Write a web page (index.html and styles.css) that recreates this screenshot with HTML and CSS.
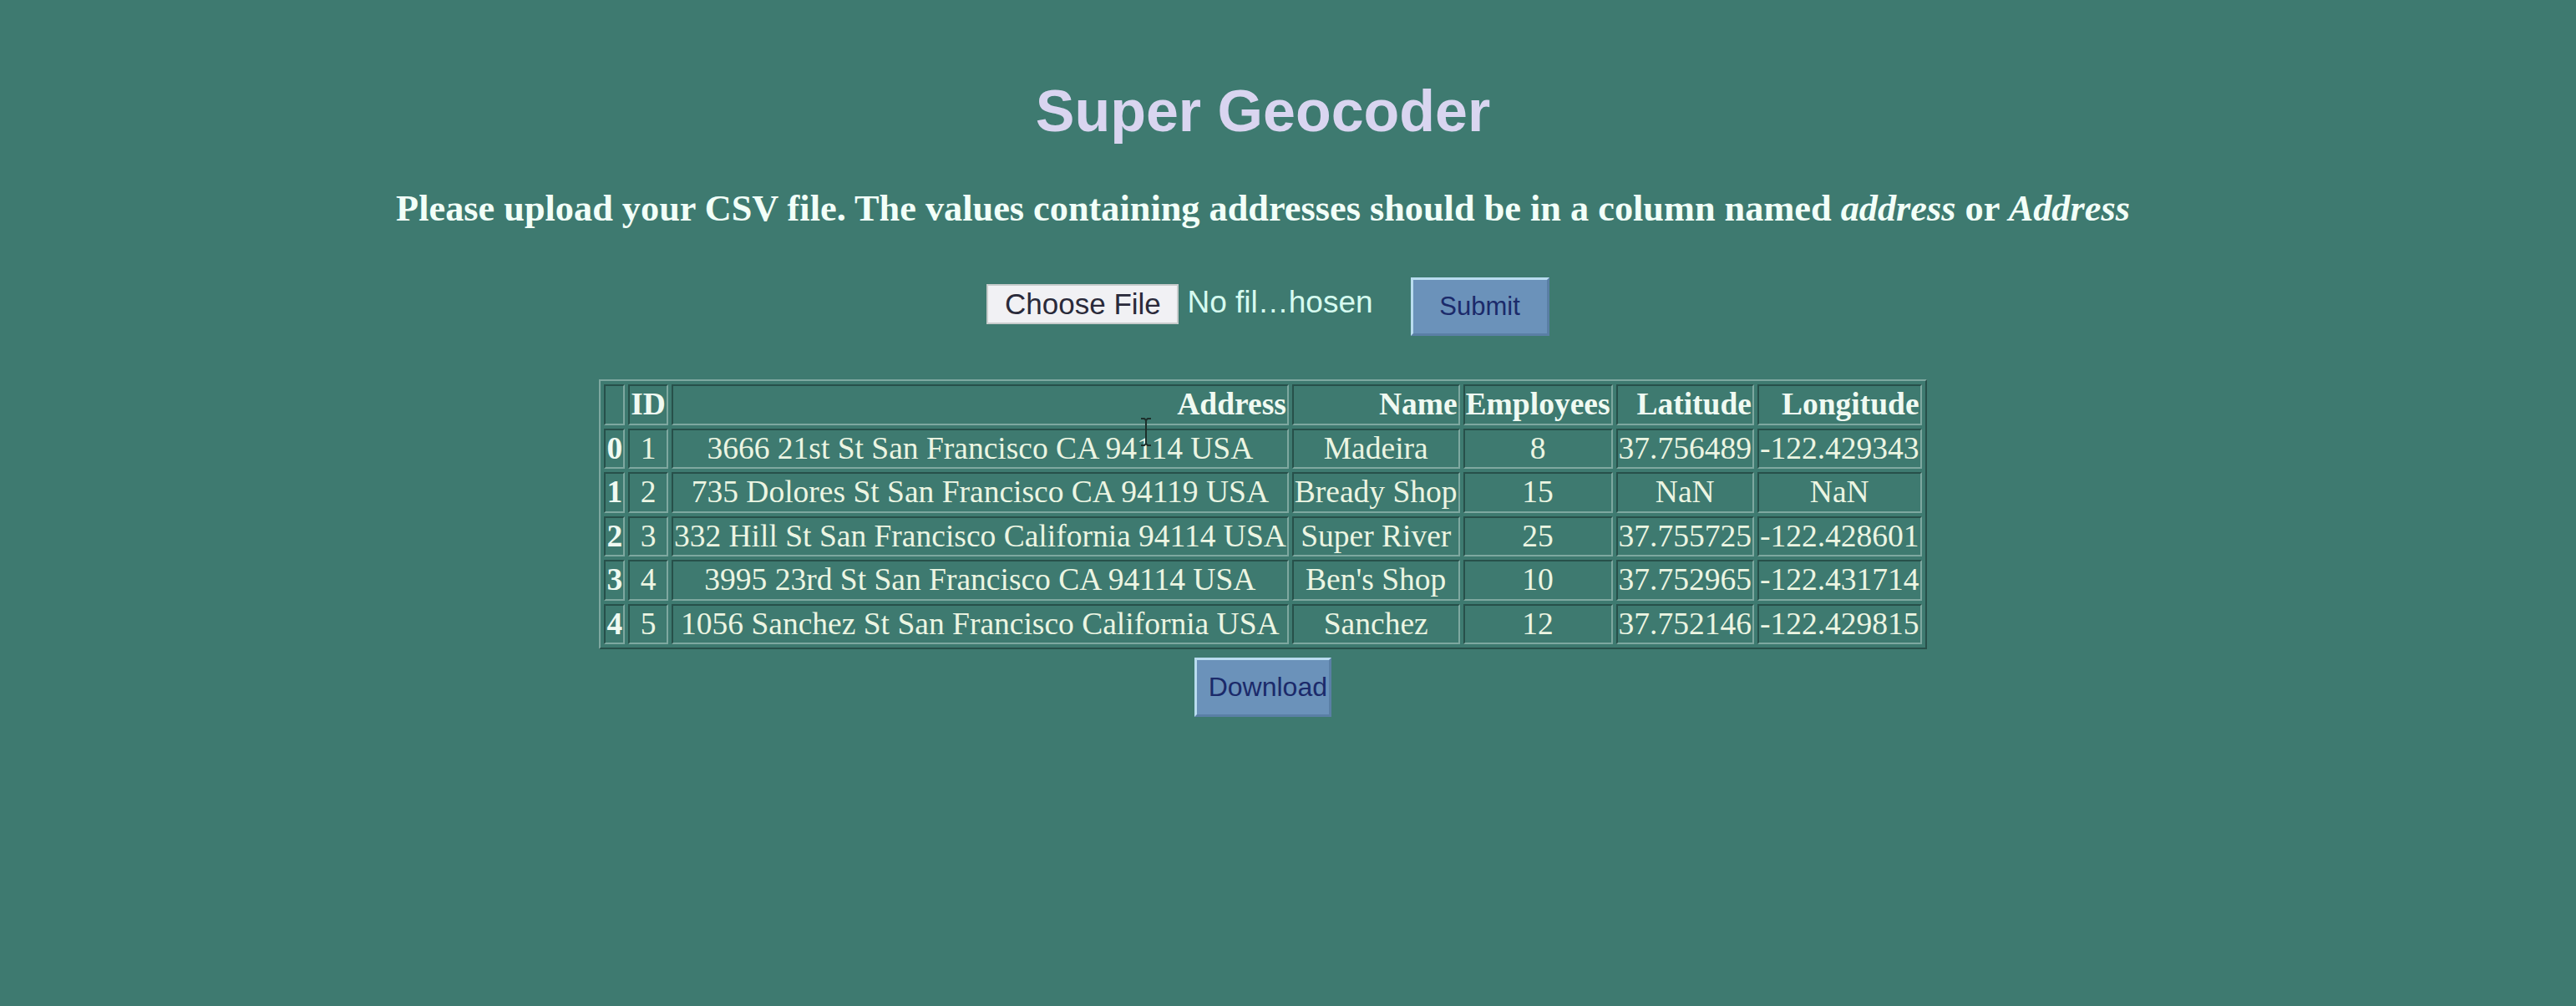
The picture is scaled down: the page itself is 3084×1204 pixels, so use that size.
FILE: index.html
```html
<!DOCTYPE html>
<html lang="en">
<head>
<meta charset="utf-8">
<title>Super Geocoder</title>
<link rel="stylesheet" href="styles.css">
</head>
<body>
<div class="page">
  <h1 class="title">Super Geocoder</h1>
  <p class="lead">Please upload your CSV file. The values containing addresses should be in a column named <em>address</em> or <em>Address</em></p>
  <form class="upload">
    <span class="choose">Choose File</span>
    <span class="nofile">No fil…hosen</span>
    <button type="button" class="btn submit">Submit</button>
  </form>
  <div class="table-wrap">
    <table class="dataframe">
      <thead>
        <tr>
          <th></th><th>ID</th><th>Address</th><th>Name</th><th>Employees</th><th>Latitude</th><th>Longitude</th>
        </tr>
      </thead>
      <tbody>
        <tr><th>0</th><td>1</td><td>3666 21st St San Francisco CA 94114 USA</td><td>Madeira</td><td>8</td><td>37.756489</td><td>-122.429343</td></tr>
        <tr><th>1</th><td>2</td><td>735 Dolores St San Francisco CA 94119 USA</td><td>Bready Shop</td><td>15</td><td>NaN</td><td>NaN</td></tr>
        <tr><th>2</th><td>3</td><td>332 Hill St San Francisco California 94114 USA</td><td>Super River</td><td>25</td><td>37.755725</td><td>-122.428601</td></tr>
        <tr><th>3</th><td>4</td><td>3995 23rd St San Francisco CA 94114 USA</td><td>Ben's Shop</td><td>10</td><td>37.752965</td><td>-122.431714</td></tr>
        <tr><th>4</th><td>5</td><td>1056 Sanchez St San Francisco California USA</td><td>Sanchez</td><td>12</td><td>37.752146</td><td>-122.429815</td></tr>
      </tbody>
    </table>
    <svg class="ibeam" width="14" height="34" viewBox="0 0 14 34" aria-hidden="true">
      <path d="M1 1h4l2 2 2-2h4M7 3v28M1 33h4l2-2 2 2h4" fill="none" stroke="#1d2f2b" stroke-width="2"/>
    </svg>
  </div>
  <div class="download-row">
    <button type="button" class="btn download">Download</button>
  </div>
</div>
</body>
</html>
```
FILE: styles.css
```css
html, body {
  margin: 0;
  padding: 0;
}
body {
  background: #3e7a70;
  font-family: "Liberation Serif", "Times New Roman", serif;
  color: #eef8f2;
}
.page {
  width: 3024px;
  padding-top: 93px;
  text-align: center;
}
.title {
  margin: 0;
  font-family: "Liberation Sans", Arial, sans-serif;
  font-weight: bold;
  font-size: 70px;
  line-height: 80px;
  color: #d9d5f0;
}
.lead {
  margin: 53px 0 0;
  font-size: 44.3px;
  line-height: 48px;
  font-weight: bold;
  color: #f2fff8;
}
.upload {
  margin: 58px 0 0 12px;
  display: flex;
  justify-content: center;
  align-items: center;
}
.choose {
  display: inline-block;
  box-sizing: border-box;
  height: 48px;
  width: 230px;
  line-height: 44px;
  margin-top: -6px;
  background: #f1f1f4;
  border: 2px solid #c8cccc;
  color: #2a2a3a;
  font-family: "Liberation Sans", Arial, sans-serif;
  font-size: 35px;
}
.nofile {
  margin-left: 10px;
  margin-top: -10px;
  font-family: "Liberation Sans", Arial, sans-serif;
  font-size: 37px;
  color: #d6fbf0;
}
.btn {
  box-sizing: border-box;
  background: #6b92ba;
  border-style: solid;
  border-width: 3px;
  border-color: #b9dcef #5a7fa5 #5a7fa5 #b9dcef;
  color: #1b2a6a;
  font-family: "Liberation Sans", Arial, sans-serif;
  font-size: 31px;
  padding: 0;
}
.submit {
  width: 166px;
  height: 70px;
  margin-left: 45px;
}
.table-wrap {
  position: relative;
  margin-top: 52px;
}
.dataframe {
  margin: 0 auto;
  border-collapse: separate;
  border-spacing: 4px;
  border-style: solid;
  border-width: 2px;
  border-color: #7ea8a0 #27504a #27504a #7ea8a0;
  font-size: 37.5px;
  line-height: 40.5px;
  color: #ecf5e2;
}
.dataframe th,
.dataframe td {
  padding: 2px 1px;
  border-style: solid;
  border-width: 2px;
  border-color: #27504a #7ea8a0 #7ea8a0 #27504a;
  white-space: nowrap;
}
.dataframe thead tr {
  text-align: right;
}
.dataframe th {
  font-weight: bold;
  color: #f0faf2;
}
.dataframe td {
  text-align: center;
}
.ibeam {
  position: absolute;
  left: 1365px;
  top: 46px;
}
.download-row {
  margin-top: 10px;
}
.download {
  width: 164px;
  height: 71px;
  font-size: 32px;
  text-align: right;
  padding-right: 2px;
}
```
